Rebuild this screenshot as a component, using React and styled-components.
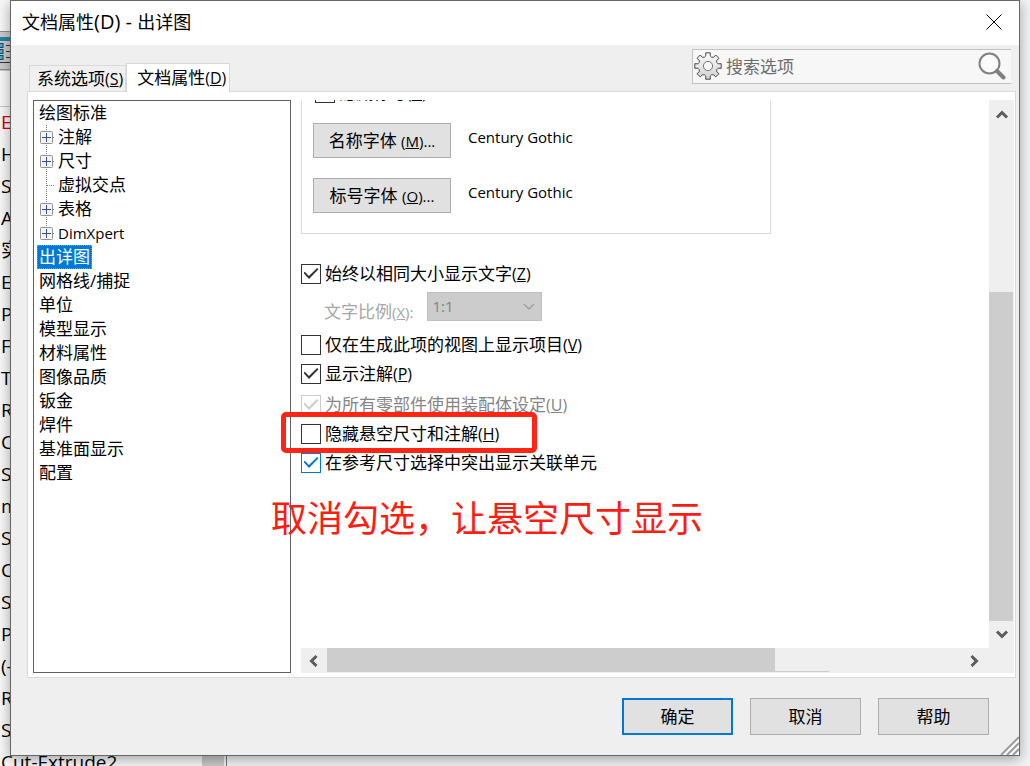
import React, { useState } from "react";
import styled, { createGlobalStyle } from "styled-components";

const GlobalStyle = createGlobalStyle`
  * { box-sizing: border-box; }
  html, body, #root { height: 100%; }
  body {
    margin: 0;
    overflow: hidden;
    color: #000;
    font-family: "Open Sans", "Noto Sans CJK SC", sans-serif;
    font-size: 15px;
    font-weight: 400;
  }
  button, input, select { font: inherit; color: inherit; margin: 0; }
`;

const features = [
  "E", "H", "S", "A", "实", "E", "P", "F", "T", "R", "C", "S", "m", "S", "C",
  "S", "P", "(-", "R", "S", "Cut-Extrude2",
];

const treeItems = [
  { name: "绘图标准" },
  { name: "注解", level: 1, plus: true },
  { name: "尺寸", level: 1, plus: true },
  { name: "虚拟交点", level: 1 },
  { name: "表格", level: 1, plus: true },
  { name: "DimXpert", level: 1, plus: true, latin: true },
  { name: "出详图" },
  { name: "网格线/捕捉" },
  { name: "单位" },
  { name: "模型显示" },
  { name: "材料属性" },
  { name: "图像品质" },
  { name: "钣金" },
  { name: "焊件" },
  { name: "基准面显示" },
  { name: "配置" },
];

const Hotkey = ({ k }) => (
  <Latin $size={16}>(<u>{k}</u>)</Latin>
);

const Check = ({ label, k, ...rest }) => (
  <CheckLabel $off={rest.disabled}>
    <Box type="checkbox" {...rest} />
    <span>{label}{k && <Hotkey k={k} />}</span>
  </CheckLabel>
);

const Arrow = ({ turn }) => (
  <svg width="14" height="14" viewBox="0 0 14 14" transform={`rotate(${turn})`}>
    <path d="M2 9.5 L7 4.5 L12 9.5" fill="none" stroke="#5c5c5c" strokeWidth="3" />
  </svg>
);

const Gear = () => {
  // 8 teeth, each one: root, tip, tip, root, with a round valley to the next
  let d = "";
  for (let i = 0; i < 8; i++) {
    const p = [[-12, 10.4], [-10, 13.4], [10, 13.4], [12, 10.4]].map(([a, r]) => {
      const t = ((i * 45 + a - 90) * Math.PI) / 180;
      return `${(14 + r * Math.cos(t)).toFixed(2)} ${(14 + r * Math.sin(t)).toFixed(2)}`;
    });
    d += `${i ? `A3 3 0 0 0 ${p[0]}` : `M${p[0]}`} L${p[1]} L${p[2]} L${p[3]} `;
    if (i === 7) {
      const t = (-102 * Math.PI) / 180;
      d += `A3 3 0 0 0 ${(14 + 10.4 * Math.cos(t)).toFixed(2)} ${(14 + 10.4 * Math.sin(t)).toFixed(2)}Z`;
    }
  }
  return (
    <svg width="28" height="28" viewBox="0 0 28 28">
      <defs>
        <linearGradient id="metal" x1="0" y1="0" x2="0" y2="1">
          <stop offset="0" stopColor="#fafafa" />
          <stop offset="1" stopColor="#d2d2d2" />
        </linearGradient>
      </defs>
      <path d={d} fill="url(#metal)" stroke="#484848" strokeLinejoin="round" />
      <circle cx="14" cy="14" r="4.6" fill="#f7f7f7" stroke="#777" />
    </svg>
  );
};

const App = () => {
  const [selected, setSelected] = useState("出详图");

  return (
    <Desktop>
      <GlobalStyle />
      <FeaturePane>
        <PaneTop>
          <svg width="12" height="40" viewBox="0 0 12 40">
            <rect width="12" height="40" fill="#c9c9c9" />
            <rect y="6" width="12" height="4" fill="#2b7fa8" />
            <g fill="#5aa5c8" stroke="#174a63">
              <rect x="-1" y="12.5" width="4" height="4" />
              <rect x="-1" y="18.5" width="4" height="4" />
              <rect x="-1" y="24.5" width="4" height="4" />
            </g>
            <path d="M6 14.5h6M6 20.5h6M6 26.5h6M0 31.5h12" stroke="#333" />
            <path d="M0 0.5h12M0 38.500h12" stroke="#8c8c8c" />
          </svg>
        </PaneTop>
        {features.map((f, i) => (
          <Feature key={i} $red={i === 0}>{f}</Feature>
        ))}
      </FeaturePane>
      <Splitter />

      <Dialog role="dialog" aria-label="文档属性">
        <TitleBar>
          <span>文档属性<Latin $size={20}>(D) - </Latin>出详图</span>
          <Close aria-label="关闭">
            <svg width="16" height="16" viewBox="0 0 16 16">
              <path d="M0.5 0.5 L15.5 15.5 M15.5 0.5 L0.5 15.5" stroke="#000" />
            </svg>
          </Close>
        </TitleBar>

        <TopRow>
          <Tabs role="tablist">
            <Tab role="tab">系统选项<Hotkey k="S" /></Tab>
            <Tab role="tab" $active>文档属性<Hotkey k="D" /></Tab>
          </Tabs>
          <Search>
            <Gear />
            <input aria-label="搜索选项" placeholder="搜索选项" />
            <svg width="28" height="28" viewBox="0 0 28 28">
              <circle cx="11.5" cy="11.5" r="10" fill="#fbfbfb" stroke="#808080" strokeWidth="2" />
              <path d="M19 19 L25.5 25.5" stroke="#808080" strokeWidth="4" strokeLinecap="round" />
            </svg>
          </Search>
        </TopRow>

        <Panel>
          <Tree>
            {treeItems.map((t, i) => (
              <TreeRow key={t.name}>
                {t.level && (
                  <svg width="19" height="24" viewBox="0 0 19 24">
                    <path d={i === 5 ? "M9.5 0V12" : "M9.5 0V24"} stroke="#808080" strokeDasharray="1 1" />
                    <path d="M10 12.5H18" stroke="#808080" strokeDasharray="1 1" />
                    {t.plus && (
                      <>
                        <rect x="3.5" y="6.5" width="12" height="12" rx="1" fill="#f4f4f4" stroke="#919191" />
                        <path d="M5 12.5H14M9.5 8V17" stroke="#35508f" />
                      </>
                    )}
                  </svg>
                )}
                <TreeItem $on={selected === t.name} $latin={t.latin} onClick={() => setSelected(t.name)}>
                  {t.name}
                </TreeItem>
              </TreeRow>
            ))}
          </Tree>

          <ScrollArea>
            <Viewport>
              <Group>
                <Check label="隐藏标号" k="B" />
                <FontRow>
                  <Button $w={138} $h={35}>名称字体 <Latin $size={15}>(<u>M</u>)...</Latin></Button>
                  <FontName>Century Gothic</FontName>
                </FontRow>
                <FontRow>
                  <Button $w={138} $h={35}>标号字体 <Latin $size={15}>(<u>O</u>)...</Latin></Button>
                  <FontName>Century Gothic</FontName>
                </FontRow>
              </Group>
              <Check label="始终以相同大小显示文字" k="Z" defaultChecked />
              <ScaleRow>
                <label htmlFor="scale">文字比例<Latin $size={15}>(<u>X</u>):</Latin></label>
                <SelectWrap>
                  <select id="scale" disabled><option>1:1</option></select>
                  <svg width="12" height="8" viewBox="0 0 12 8">
                    <path d="M1 1 L6 6 L11 1" fill="none" stroke="#9a9a9a" strokeWidth="1.2" />
                  </svg>
                </SelectWrap>
              </ScaleRow>
              <Check label="仅在生成此项的视图上显示项目" k="V" />
              <Check label="显示注解" k="P" defaultChecked />
              <Checks>
                <Check label="为所有零部件使用装配体设定" k="U" defaultChecked disabled />
                <Check label="隐藏悬空尺寸和注解" k="H" />
                <Check label="在参考尺寸选择中突出显示关联单元" defaultChecked data-hot="1" />
              </Checks>
            </Viewport>
            <VBar>
              <Arrow turn={0} />
              <VTrack><VThumb /></VTrack>
              <Arrow turn={180} />
            </VBar>
            <HBar>
              <Arrow turn={270} />
              <HTrack><HThumb /><HRest /></HTrack>
              <Arrow turn={90} />
            </HBar>
          </ScrollArea>
          <Highlight />
          <Note>取消勾选，让悬空尺寸显示</Note>
        </Panel>

        <Footer>
          <Button $w={111} $h={37} $primary>确定</Button>
          <Button $w={111} $h={37}>取消</Button>
          <Button $w={111} $h={37}>帮助</Button>
        </Footer>
        <Grip width="20" height="20" viewBox="0 0 20 20">
          <path d="M0 20L20 0V20Z" fill="#fff" />
          <path d="M2 20L20 2M8 20L20 8M14 20L20 14" stroke="#9a9a9a" strokeWidth="2" />
        </Grip>
      </Dialog>
    </Desktop>
  );
};

const Desktop = styled.div`
  position: relative;
  display: flex;
  height: 100%;
  min-height: 600px;
  overflow: hidden;
  background: #f2f3f5;
`;

const FeaturePane = styled.div`
  width: 202px;
  background: #f7f7f7;
`;

const PaneTop = styled.div`
  height: 107px;
  padding-top: 31px;
  border-bottom: 1px solid #c4c4c4;
`;

const Feature = styled.div`
  height: 32px;
  padding-left: 1px;
  font-size: 19px;
  line-height: 30px;
  white-space: nowrap;
  color: ${(props) => (props.$red ? "#d00000" : "#000")};
`;

const Splitter = styled.div`
  width: 25px;
  border-left: 22px solid #c8c8c8;
  border-right: 1px solid #777;
`;

const Dialog = styled.div`
  position: absolute;
  top: 0;
  right: 10px;
  bottom: 10px;
  left: 10px;
  display: flex;
  flex-direction: column;
  border: 1px solid #666;
  background: #efefef;
  box-shadow: 0 3px 12px rgba(0, 0, 0, 0.35);
`;

const TitleBar = styled.div`
  display: flex;
  justify-content: space-between;
  align-items: center;
  height: 44px;
  padding: 0 17px 2px 11px;
  background: #fff;
  font-size: 18px;
  line-height: 26px;
  white-space: pre;
`;

const Close = styled.button`
  display: flex;
  padding: 0;
  border: 0;
  background: none;
`;

const TopRow = styled.div`
  display: flex;
  justify-content: space-between;
  align-items: flex-end;
  height: 46px;
  padding: 0 8px 0 18px;
`;

const Tabs = styled.div`
  display: flex;
  align-items: flex-end;
`;

const Latin = styled.span`
  font-size: ${(props) => props.$size}px;
  line-height: 1;
`;

const Tab = styled.button`
  position: relative;
  height: ${(props) => (props.$active ? 29 : 26)}px;
  margin-bottom: ${(props) => (props.$active ? -1 : 0)}px;
  padding: 0 ${(props) => (props.$active ? 3 : 2)}px 0 ${(props) => (props.$active ? 10 : 7)}px;
  border: 1px solid #d9d9d9;
  border-bottom: 0;
  background: ${(props) => (props.$active ? "#fff" : "#f0f0f0")};
  z-index: ${(props) => (props.$active ? 1 : 0)};
  font-size: 17px;
  line-height: 24px;
  white-space: nowrap;
`;

const Search = styled.div`
  display: flex;
  align-items: center;
  gap: 4px;
  width: 319px;
  height: 35px;
  margin-bottom: 7px;
  padding: 0 5px 2px 1px;
  border: 1px solid #c3c3c3;
  border-right: 0;
  background: #f7f7f7;

  input {
    flex: 1;
    min-width: 0;
    padding: 2px 0 0;
    border: 0;
    outline: 0;
    background: none;
    font-size: 17px;
  }
  input::placeholder { color: #6d6d6d; opacity: 1; }
`;

const Panel = styled.div`
  position: relative;
  display: flex;
  flex: 1;
  min-height: 0;
  gap: 10px;
  margin: 0 3px 0 16px;
  padding: 8px 1px 4px 5px;
  border: 1px solid #dadada;
  background: #fff;
`;

const Tree = styled.div`
  width: 258px;
  border: 1px solid #606060;
`;

const TreeRow = styled.div`
  display: flex;
  align-items: center;
  height: 24px;
  padding-left: 3px;

  svg { flex: none; }
`;

const TreeItem = styled.button`
  height: 24px;
  padding: 0 1px;
  border: 1px ${(props) => (props.$on ? "dotted #e08a2c" : "solid transparent")};
  background: ${(props) => (props.$on ? "#0078d7" : "none")};
  color: ${(props) => (props.$on ? "#fff" : "#000")};
  font-size: ${(props) => (props.$latin ? 15 : 17)}px;
  line-height: 22px;
  white-space: nowrap;
`;

const ScrollArea = styled.div`
  display: grid;
  flex: 1;
  min-width: 0;
  grid-template-columns: 1fr 25px;
  grid-template-rows: 1fr 25px;
`;

const Viewport = styled.div`
  min-width: 0;
  min-height: 0;
  overflow: hidden;
`;

const CheckLabel = styled.label`
  display: flex;
  align-items: center;
  gap: 4px;
  height: 29px;
  font-size: 17px;
  line-height: 29px;
  white-space: nowrap;
  color: ${(props) => (props.$off ? "#858585" : "#000")};
`;

const Box = styled.input`
  appearance: none;
  display: grid;
  place-items: center;
  width: 20px;
  height: 20px;
  border: 1px solid #333;
  background: #fff;
  color: #333;

  &:checked::after {
    content: "";
    width: 15px;
    height: 11px;
    background: currentColor;
    clip-path: polygon(0 45%, 9% 33%, 36% 73%, 91% 0, 100% 11%, 37% 100%);
  }
  &:disabled { border-color: #ccc; color: #ccc; }
  &[data-hot] { border-color: #0078d7; color: #0078d7; }
`;

/* pulled up: the pane is scrolled part of the way down */
const Group = styled.div`
  width: 470px;
  height: 160px;
  margin-top: -26px;
  margin-bottom: 25px;
  padding: 4px 11px;
  border: 1px solid #dcdcdc;
  border-top: 0;

  > label { padding-left: 2px; }
`;

const FontRow = styled.div`
  display: flex;
  align-items: center;
  gap: 17px;
  height: 35px;
  margin-top: 16px;

  & + & { margin-top: 20px; }
`;

const FontName = styled.span`
  padding-bottom: 8px;
`;

const Button = styled.button`
  width: ${(props) => props.$w}px;
  height: ${(props) => props.$h}px;
  padding: 0 0 2px;
  border: ${(props) => (props.$primary ? "2px solid #0078d7" : "1px solid #adadad")};
  background: #e1e1e1;
  font-size: 17px;
  white-space: nowrap;
`;

const ScaleRow = styled.div`
  display: flex;
  align-items: center;
  height: 42px;
  padding-left: 23px;
  gap: 14px;
  color: #a6a6a6;
  font-size: 17px;

  label { padding-top: 2px; }
`;

const SelectWrap = styled.div`
  position: relative;
  width: 115px;
  margin-bottom: 6px;

  select {
    appearance: none;
    display: block;
    width: 100%;
    height: 29px;
    padding: 0 4px;
    border: 1px solid #bfbfbf;
    border-radius: 0;
    background: #ccc;
    color: #838383;
    font-size: 15px;
    opacity: 1;
  }
  svg {
    position: absolute;
    top: 11px;
    right: 7px;
  }
`;

const Checks = styled.div`
  margin-top: 2px;
`;

const VBar = styled.div`
  display: flex;
  flex-direction: column;
  align-items: center;
  justify-content: space-between;
  padding: 8px 0 7px;
  background: #efefef;
`;

const VTrack = styled.div`
  display: flex;
  flex-direction: column;
  justify-content: flex-end;
  flex: 1;
  width: 100%;
  padding-bottom: 6px;
`;

const VThumb = styled.div`
  width: 24px;
  height: 66%;
  background: #cdcdcd;
`;

const HBar = styled.div`
  grid-column: 1 / 3;
  display: flex;
  align-items: center;
  padding: 0 33px 0 6px;
  background: #efefef;
`;

const HTrack = styled.div`
  display: flex;
  flex: 1;
  align-self: stretch;
  padding-left: 6px;
`;

const HThumb = styled.div`
  width: 70%;
  height: 24px;
  background: #cdcdcd;
`;

const HRest = styled.div`
  width: 54px;
  height: 24px;
  border-bottom: 1px solid #cdcdcd;
`;

const Highlight = styled.div`
  position: absolute;
  top: 320px;
  left: 253px;
  width: 256px;
  height: 41px;
  border: 5px solid #ff2414;
  border-radius: 5px;
  pointer-events: none;
`;

const Note = styled.div`
  position: absolute;
  top: 400px;
  left: 243px;
  color: #ff1c10;
  font-size: 36px;
  line-height: 54px;
  white-space: nowrap;
`;

const Footer = styled.div`
  display: flex;
  justify-content: flex-end;
  gap: 17px;
  height: 77px;
  padding: 20px 30px 0 0;
`;

const Grip = styled.svg`
  position: absolute;
  right: 0;
  bottom: 0;
`;

export default App;
